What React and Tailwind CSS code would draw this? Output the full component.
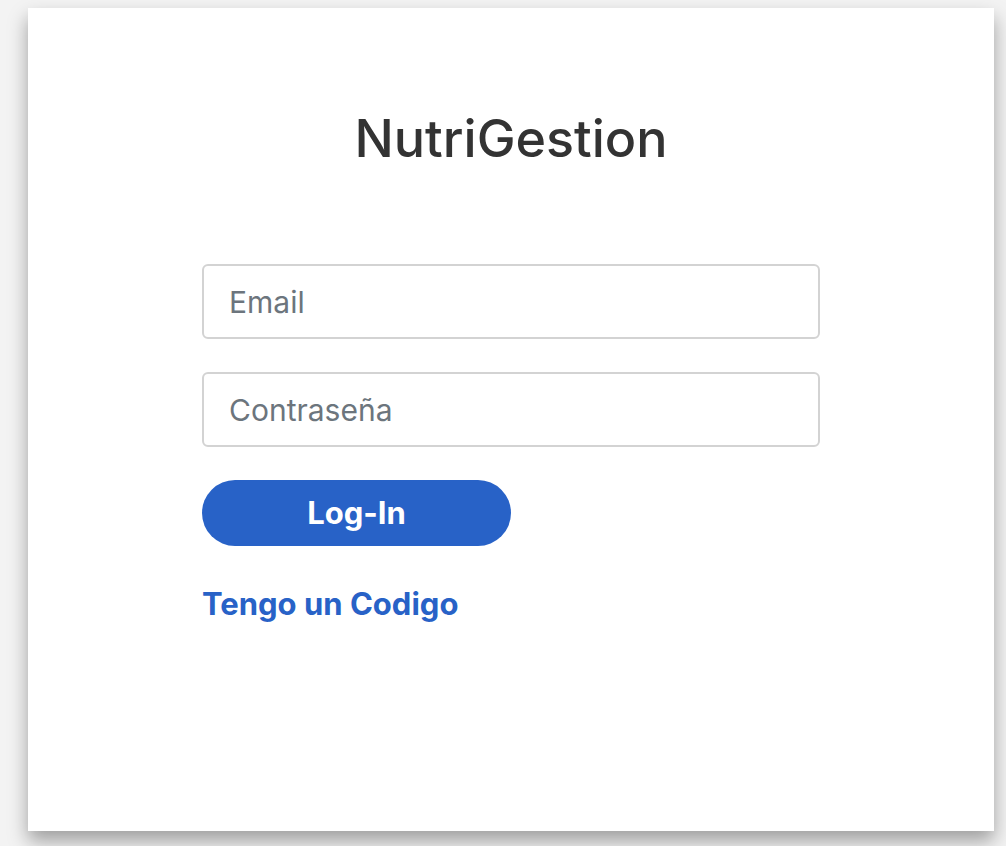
export default function App() {
  return (
    <div className="min-h-screen w-full bg-[#f3f3f3] pt-2 pl-7 pr-3 font-['Inter',sans-serif]">
      <div className="h-[823px] w-[966px] bg-white shadow-[0_10px_18px_rgba(0,0,0,0.35)]">
        <div className="flex flex-col items-center pt-[100px]">
          <h1 className="text-[52px] font-medium leading-[62px] text-[#333333]">NutriGestion</h1>
        </div>
        <form className="mx-auto mt-[94px] flex w-[618px] flex-col">
          <input
            type="email"
            placeholder="Email"
            className="h-[75px] w-full rounded-md border-2 border-[#d3d3d3] px-[25px] text-[30px] text-[#495057] placeholder:text-[#6c757d] outline-none"
          />
          <input
            type="password"
            placeholder="Contraseña"
            className="mt-[33px] h-[75px] w-full rounded-md border-2 border-[#d3d3d3] px-[25px] text-[30px] text-[#495057] placeholder:text-[#6c757d] outline-none"
          />
          <button
            type="button"
            className="mt-[33px] h-[66px] w-[309px] rounded-full bg-[#2862c7] text-[31px] font-bold text-white"
          >
            Log-In
          </button>
          <a href="#" className="mt-[38px] text-[31px] font-bold leading-[40px] text-[#2862c7]">
            Tengo un Codigo
          </a>
        </form>
      </div>
    </div>
  )
}
